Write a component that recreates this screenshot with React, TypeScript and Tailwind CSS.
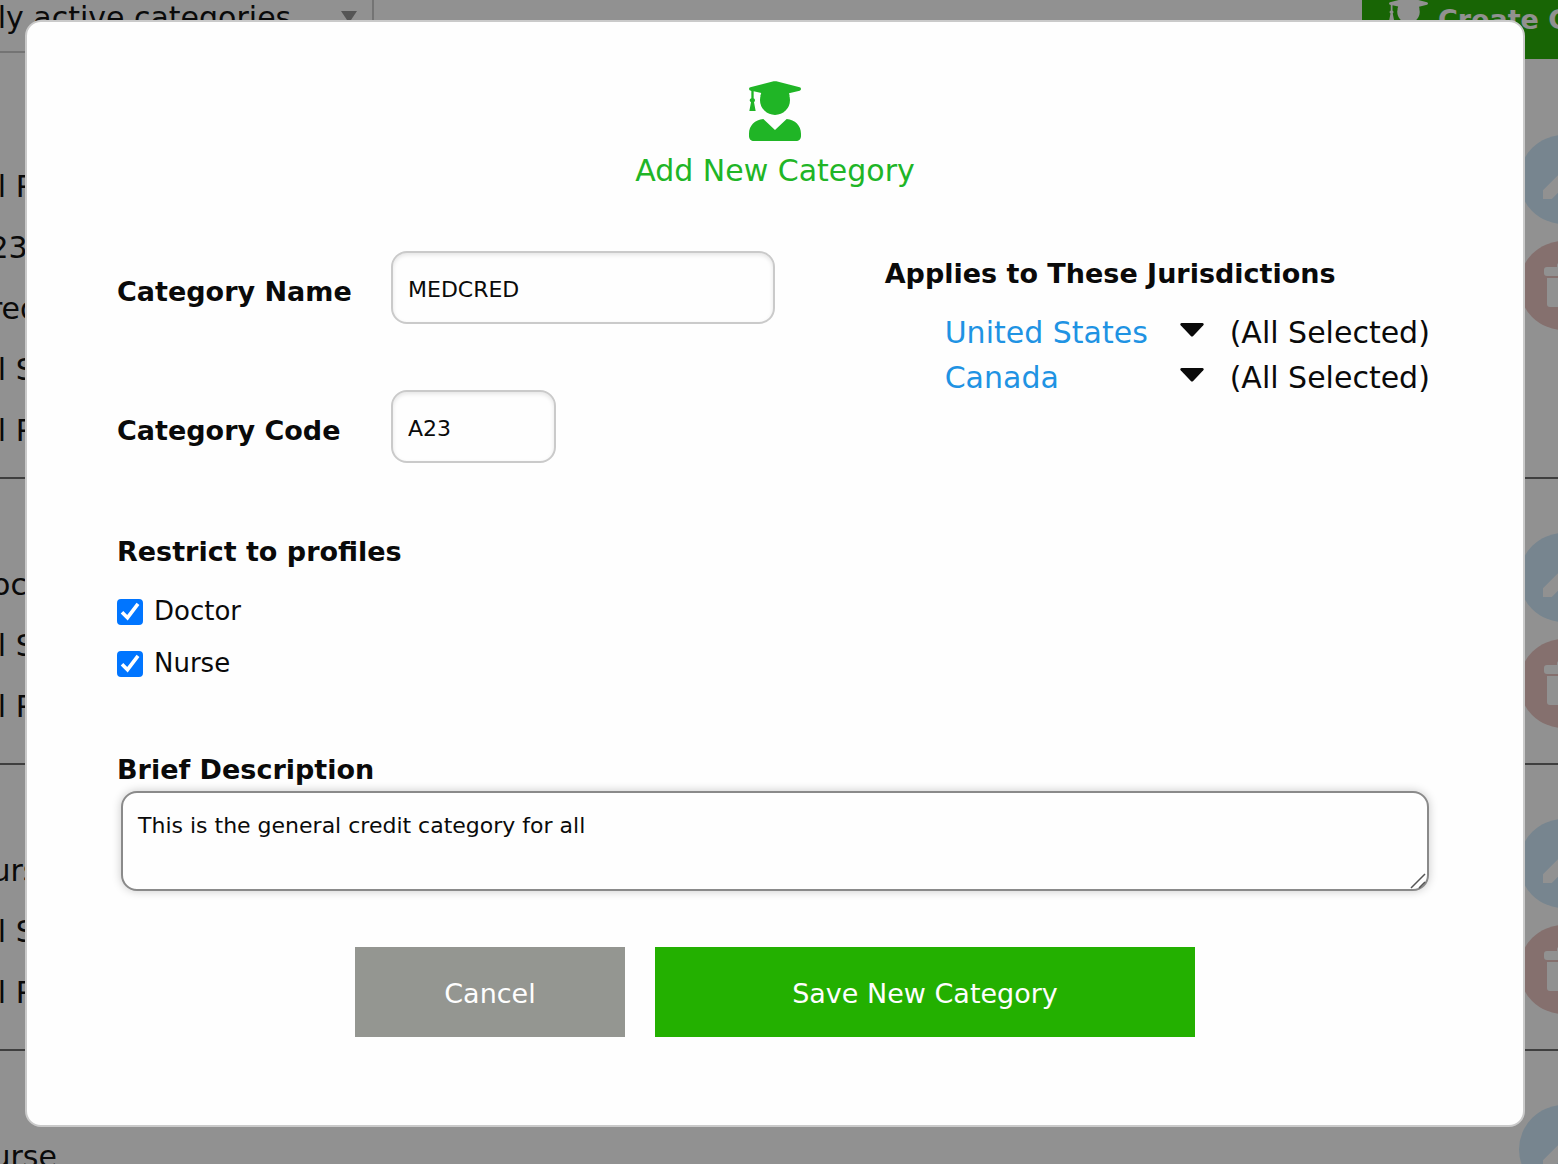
import { useState } from 'react'

interface CategoryRow {
    id: string
    lines: string[]
}

const rows: CategoryRow[] = [
    { id: 'medical', lines: ['All Profiles', 'A23', 'Credit', 'All States', 'All Provinces'] },
    { id: 'doctor', lines: ['Doctor', 'All States', 'All Provinces'] },
    { id: 'nurse', lines: ['Nurse', 'All States', 'All Provinces'] },
    { id: 'nurse-only', lines: ['Nurse', 'All States', 'All Provinces'] },
]

const countries = ['United States', 'Canada']

function GraduateIcon({ className }: { className: string }) {
    return (
        <svg viewBox="0 0 156 180" fill="currentColor" className={className} aria-hidden="true">
            <path d="M74 1Q78 0 82 1L152 19Q156 20 156 24Q156 28 152 29L120 37L122 44H34L37 36L14 31V52Q18 54 18 58Q18 61 15 64L20 90H1L6 64Q2 61 2 58Q2 54 7 52V30Q0 28 0 24Q0 20 4 19Z" />
            <circle cx="78" cy="57" r="45" />
            <path d="M43 114L78 147L113 114C138 116 156 134 156 158V165C156 174 150 180 141 180H15C6 180 0 174 0 165V158C0 134 18 116 43 114Z" />
        </svg>
    )
}

function EditIcon() {
    return (
        <svg viewBox="0 0 24 24" fill="currentColor" className="size-14" aria-hidden="true">
            <path d="M3 16.4v3.75h3.75L17.81 9.1l-3.75-3.75L3 16.4zM20.71 6.2a1 1 0 0 0 0-1.41l-2.34-2.34a1 1 0 0 0-1.41 0l-1.83 1.83 3.75 3.75 1.83-1.83z" />
        </svg>
    )
}

function TrashIcon() {
    return (
        <svg viewBox="0 0 40 46" fill="currentColor" className="h-[46px] w-10" aria-hidden="true">
            <path d="M13 4V2Q13 0 15 0H25Q27 0 27 2V4H37Q40 4 40 7V10Q40 13 37 13H3Q0 13 0 10V7Q0 4 3 4ZM3 15H37V41Q37 44 34 44H6Q3 44 3 41Z" />
        </svg>
    )
}

function CategoryList() {
    return (
        <div className="-mr-[50px] -ml-[31px]">
            <header className="-mt-[19px] mb-[22px] flex items-start justify-between">
                <div className="relative -ml-7">
                    <select
                        aria-label="Filter categories"
                        className="h-[72px] w-[433px] appearance-none border-2 border-[#cacaca] bg-white pl-3 text-[30px]"
                    >
                        <option>Only active categories</option>
                    </select>
                    <svg viewBox="0 0 16 12" className="absolute top-[30px] right-[17px] h-3 w-4 fill-[#929292]" aria-hidden="true">
                        <path d="M0 0H16L8 12Z" />
                    </svg>
                </div>
                <button className="flex h-[78px] w-[420px] shrink-0 items-center gap-2.5 bg-[#23b000] pl-[27px] text-[27px] font-bold whitespace-nowrap text-white -mr-[174px]">
                    <GraduateIcon className="h-[46px] w-[39px] shrink-0" />
                    Create Category
                </button>
            </header>
            {rows.map((row) => (
                <section key={row.id} className="flex items-start justify-between border-b-2 border-[#6b6b6b]">
                    <ul className="pt-[75px] pb-4 text-[30px] leading-[61px]">
                        {row.lines.map((line) => (
                            <li key={line}>{line}</li>
                        ))}
                    </ul>
                    <div className="flex flex-col gap-[17px] pt-[54px] pb-[35px] text-white">
                        <button aria-label="Edit" className="flex size-[89px] items-center justify-center rounded-full bg-[#d0eafc]">
                            <EditIcon />
                        </button>
                        <button aria-label="Delete" className="flex size-[89px] items-center justify-center rounded-full bg-[#eac4c0]">
                            <TrashIcon />
                        </button>
                    </div>
                </section>
            ))}
        </div>
    )
}

function ProfileCheckbox({ label }: { label: string }) {
    const [checked, setChecked] = useState(true)
    return (
        <label className="flex h-[52px] items-center gap-[11px] text-[26px]">
            <span className="relative size-[26px]">
                <input
                    type="checkbox"
                    checked={checked}
                    onChange={() => setChecked(!checked)}
                    className="peer block size-[26px] appearance-none rounded border-2 border-[#767676] bg-white checked:border-[#0075ff] checked:bg-[#0075ff]"
                />
                <svg
                    viewBox="0 0 26 26"
                    className="pointer-events-none absolute inset-0 hidden peer-checked:block"
                    fill="none"
                    stroke="#fff"
                    strokeWidth="3.6"
                    aria-hidden="true"
                >
                    <path d="M5 13.2L10.500 18.700L21 4.900" />
                </svg>
            </span>
            <span className="pb-0.5">{label}</span>
        </label>
    )
}

const inputClass =
    'h-[73px] rounded-2xl border-2 border-[#cacaca] bg-[#fefefe] px-[15px] pt-1 text-[22px] shadow-[inset_0_2px_4px_rgba(10,10,10,0.1)]'

function AddCategoryModal() {
    const [name, setName] = useState('MEDCRED')
    const [code, setCode] = useState('A23')
    const [description, setDescription] = useState('This is the general credit category for all')

    return (
        <div
            role="dialog"
            aria-labelledby="modal-title"
            className="rounded-2xl border-2 border-[#cacaca] bg-[#fefefe] px-[90px] pt-[59px] pb-[88px]"
        >
            <div className="flex flex-col items-center text-[#20b526]">
                <GraduateIcon className="h-[60px] w-[52px]" />
                <h1 id="modal-title" className="mt-[7px] text-[30px] leading-[45px]">Add New Category</h1>
            </div>

            <form onSubmit={(e) => e.preventDefault()}>
                <div className="mt-[58px] grid grid-cols-[7fr_5fr]">
                    <div>
                        <div className="flex items-center">
                            <label htmlFor="name" className="w-[274px] pt-2.5 text-[27px] font-bold">Category Name</label>
                            <input id="name" value={name} onChange={(e) => setName(e.target.value)} className={`${inputClass} w-1/2`} />
                        </div>
                        <div className="mt-[66px] flex items-center">
                            <label htmlFor="code" className="w-[274px] pt-2.5 text-[27px] font-bold">Category Code</label>
                            <input id="code" value={code} onChange={(e) => setCode(e.target.value)} className={`${inputClass} w-[165px]`} />
                        </div>
                    </div>

                    <div>
                        <h2 className="text-[27px] leading-[45px] font-bold whitespace-nowrap">Applies to These Jurisdictions</h2>
                        <ul className="mt-3.5 pl-[60px] text-[30px] leading-[45px] whitespace-nowrap">
                            {countries.map((country) => (
                                <li key={country} className="flex items-center">
                                    <a href="#" className="w-[235px] text-[#1f93e3]">{country}</a>
                                    <button type="button" aria-label={`Show ${country}`} className="mr-[26px] pb-1.5">
                                        <svg viewBox="0 0 24 14" className="h-3.5 w-6 fill-[#0a0a0a]" aria-hidden="true">
                                            <path d="M1.5 0H22.5Q24.500 .8 23.300 2.300L13.200 13Q12 14 10.800 13L.7 2.300Q-.5 .8 1.500 0Z" />
                                        </svg>
                                    </button>
                                    <span>(All Selected)</span>
                                </li>
                            ))}
                        </ul>
                    </div>
                </div>

                <fieldset className="mt-[66px]">
                    <legend className="text-[27px] leading-[45px] font-bold">Restrict to profiles</legend>
                    <div className="pt-3">
                        <ProfileCheckbox label="Doctor" />
                        <ProfileCheckbox label="Nurse" />
                    </div>
                </fieldset>

                <div className="mt-[58px]">
                    <label htmlFor="description" className="block text-[27px] leading-[43px] font-bold">Brief Description</label>
                    <div className="relative mx-1">
                        <textarea
                            id="description"
                            value={description}
                            onChange={(e) => setDescription(e.target.value)}
                            className="block h-[100px] w-full resize-none rounded-2xl border-2 border-[#8a8a8a] bg-[#fefefe] px-[15px] py-4 text-[22px] leading-[33px] shadow-[0_0_10px_#cacaca]"
                        />
                        <svg viewBox="0 0 16 16" className="absolute right-[3px] bottom-0.5 size-4" fill="none" stroke="#555" strokeWidth="1.5" aria-hidden="true">
                            <path d="M1 15L15 1M9 15L15 9" />
                        </svg>
                    </div>
                </div>

                <div className="mt-14 flex justify-center gap-[30px] text-[27px] text-[#fefefe]">
                    <button type="button" className="h-[90px] w-[270px] bg-[#949691] pt-1">Cancel</button>
                    <button type="submit" className="h-[90px] w-[540px] bg-[#23b000] pt-1">Save New Category</button>
                </div>
            </form>
        </div>
    )
}

export default function App() {
    return (
        <div className="relative h-screen overflow-hidden bg-white font-['Verdana','DejaVu_Sans',sans-serif] text-[#0a0a0a]">
            <CategoryList />
            <div className="absolute inset-0 overflow-hidden bg-[#0a0a0a]/45 pt-5 pr-[33px] pl-[25px]">
                <AddCategoryModal />
            </div>
        </div>
    )
}
